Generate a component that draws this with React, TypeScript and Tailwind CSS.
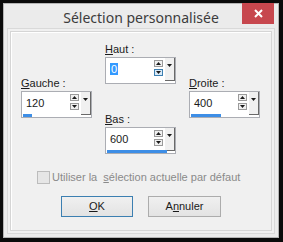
import React from "react";

interface SpinProps {
  value: number;
  max: number;
  selected?: boolean;
  hotDown?: boolean;
}

const font = { fontFamily: '"Liberation Sans", Arial, sans-serif' };

function Arrow({ down }: { down?: boolean }) {
  return (
    <svg width="5" height="3" viewBox="0 0 5 3" className="block">
      {down ? <polygon points="0,0 5,0 2.5,3" fill="#1a1a1a" /> : <polygon points="0,3 5,3 2.5,0" fill="#1a1a1a" />}
    </svg>
  );
}

function SpinBox({ value, max, selected, hotDown }: SpinProps) {
  const barWidth = Math.round((value / max) * 60);
  return (
    <div className="flex h-[27px] w-[71px] flex-col border border-[#abadb3] bg-white">
      <div className="flex h-[22px]">
        <div className="flex flex-1 items-center pl-[4px] text-[11px] text-[#1a1a1a]">
          {selected ? (
            <span className="bg-[#3399ff] px-[1px] leading-[12px] text-white">{value}</span>
          ) : (
            <span>{value}</span>
          )}
        </div>
        <div className="flex w-[9px] flex-col gap-[2px] pt-[2px]">
          <div className="flex h-[7px] items-center justify-center border border-[#9a9a9a] bg-[#f0f0f0]">
            <Arrow />
          </div>
          <div
            className={`flex h-[7px] items-center justify-center border ${
              hotDown ? "border-[#3c7fb1] bg-[#d8eaf9]" : "border-[#9a9a9a] bg-[#f0f0f0]"
            }`}
          >
            <Arrow down />
          </div>
        </div>
        <div className="ml-[2px] flex h-[23px] w-[10px] justify-center border-r border-b border-r-[#696969] border-b-[#696969] bg-[#f0f0f0] pt-[6px]">
          <Arrow down />
        </div>
      </div>
      <div className="flex h-[3px] pl-[1px]">
        <div className="h-[3px] bg-[#3d8ee6]" style={{ width: barWidth }} />
      </div>
    </div>
  );
}

function Field({ label, mnemonic, children }: { label: string; mnemonic: string; children: React.ReactNode }) {
  return (
    <div className="flex flex-col gap-[1px]">
      <div className="h-[13px] text-[11px] leading-[13px] text-[#1a1a1a]">
        <span className="underline underline-offset-[1px]">{mnemonic}</span>
        {label}
      </div>
      {children}
    </div>
  );
}

export default function App() {
  return (
    <div className="h-[242px] w-[283px] bg-[#0a0a0a] p-[3px] pr-[4px] pb-[4px]" style={font}>
      <div className="flex h-full w-full flex-col border border-[#b4b4b4] bg-[#ebebeb]">
        {/* title bar */}
        <div className="relative flex h-[25px] items-center justify-center">
          <span
            className="pt-[3px] text-[14px] text-[#3c3c3c]"
            style={{ fontFamily: '"Noto Sans", "Open Sans", sans-serif' }}
          >
            Sélection personnalisée
          </span>
          <div className="absolute top-[-1px] right-[4px] flex h-[21px] w-[32px] items-center justify-center bg-[#c7474e]">
            <svg width="9" height="9" viewBox="0 0 9 9">
              <path d="M1 1 L8 8 M8 1 L1 8" stroke="white" strokeWidth="2" />
            </svg>
          </div>
        </div>

        {/* client area */}
        <div className="mx-[3px] mb-[3px] flex-1 border border-[#d9d9d9] bg-[#f0f0f0] p-[2px]">
          <div className="flex h-[200px] flex-col border border-[#d5d5d5] shadow-[inset_1px_1px_0_#ffffff]">
            <div className="flex gap-[13px] pl-[10px]">
              <div className="pt-[45px]">
                <Field mnemonic="G" label="auche :">
                  <SpinBox value={120} max={800} />
                </Field>
              </div>
              <div className="flex flex-col pt-[11px]">
                <Field mnemonic="H" label="aut :">
                  <SpinBox value={0} max={600} selected hotDown />
                </Field>
                <div className="mt-[29px]">
                  <Field mnemonic="B" label="as :">
                    <SpinBox value={600} max={600} />
                  </Field>
                </div>
              </div>
              <div className="pt-[45px]">
                <Field mnemonic="D" label="roite :">
                  <SpinBox value={400} max={800} />
                </Field>
              </div>
            </div>

            <div className="mt-[16px] flex h-[15px] items-center gap-[2px] pl-[26px] text-[11px] text-[#8a8a8a]">
              <div className="h-[13px] w-[13px] border border-[#bcbcbc] bg-[#e6e6e6]" />
              <span className="whitespace-pre">
                Utiliser la  <span className="underline underline-offset-[1px]">s</span>élection actuelle par défaut
              </span>
            </div>

            <div className="mt-[11px] flex gap-[15px] pl-[50px] text-[11px] text-[#1a1a1a]">
              <div className="flex h-[21px] w-[72px] items-center justify-center border border-[#3c7fb1] bg-gradient-to-b from-[#f0f0f0] to-[#e3e3e3]">
                <span>
                  <span className="underline underline-offset-[1px]">O</span>K
                </span>
              </div>
              <div className="flex h-[21px] w-[73px] items-center justify-center border border-[#acacac] bg-gradient-to-b from-[#f0f0f0] to-[#e3e3e3]">
                <span>
                  A<span className="underline underline-offset-[1px]">n</span>nuler
                </span>
              </div>
            </div>
          </div>
        </div>
      </div>
    </div>
  );
}
